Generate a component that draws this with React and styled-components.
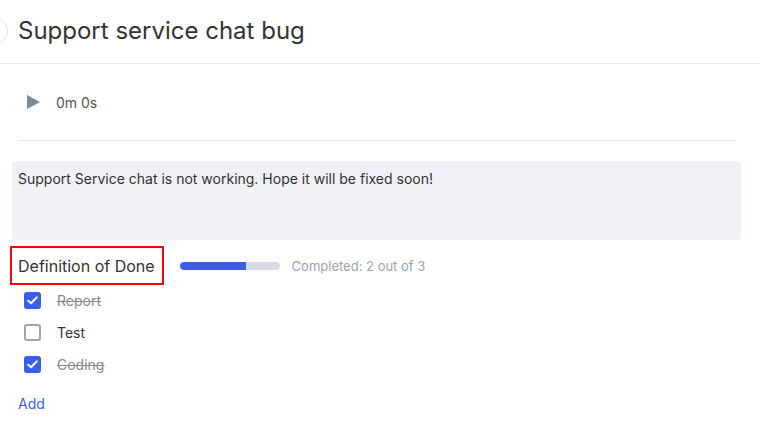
import React from "react";
import styled, { createGlobalStyle } from "styled-components";

const Global = createGlobalStyle`
  html, body { margin: 0; padding: 0; background: #fff; }
  body { font-family: Inter, "Noto Sans", sans-serif; color: #333; overflow: hidden; }
  * { box-sizing: border-box; }
`;

const Page = styled.div`
  width: 760px;
  height: 424px;
  overflow: hidden;
`;

const Header = styled.header`
  height: 64px;
  display: flex;
  align-items: center;
  gap: 10px;
  border-bottom: 1px solid #e7e6f2;
  padding-bottom: 2px;
`;

const BackCircle = styled.div`
  width: 26px;
  height: 26px;
  margin-left: -18px;
  border-radius: 50%;
  border: 1px solid #e2e2e6;
  background: #fff;
  flex: none;
`;

const Title = styled.h1`
  margin: 0;
  font-size: 24px;
  font-weight: 400;
  color: #333;
  letter-spacing: 0;
`;

const TimerRow = styled.div`
  margin: 0 25px 0 18px;
  height: 77px;
  border-bottom: 1px solid #ebe9f5;
  display: flex;
  align-items: center;
  gap: 16px;
  padding-left: 9px;
`;

const TimeText = styled.span`
  font-size: 14px;
  color: #555;
`;

const Description = styled.div`
  margin: 20px 19px 0 12px;
  height: 79px;
  background: #f0f1f6;
  border-radius: 4px;
  padding: 8px 6px;
  font-size: 14px;
  line-height: 20px;
  color: #333;
`;

const DodRow = styled.div`
  display: flex;
  align-items: center;
  margin-top: 6px;
  margin-left: 10px;
`;

const Highlight = styled.div`
  border: 2px solid #f00;
  height: 39px;
  padding: 0 7px 0 6px;
  display: flex;
  align-items: center;
`;

const DodTitle = styled.span`
  font-size: 16px;
  color: #333;
`;

const Progress = styled.div`
  width: 100px;
  height: 8px;
  border-radius: 4px;
  background: #d6dae4;
  margin-left: 16px;
  overflow: hidden;
`;

const ProgressFill = styled.div`
  height: 100%;
  background: #3a5fe5;
  border-radius: 4px 0 0 4px;
`;

const Completed = styled.span`
  margin-left: 12px;
  font-size: 13px;
  color: #97a3b6;
`;

const List = styled.ul`
  list-style: none;
  margin: -1px 0 0;
  padding: 0 0 0 24px;
`;

const Item = styled.li`
  height: 32px;
  display: flex;
  align-items: center;
  gap: 16px;
`;

const Box = styled.span`
  width: 17px;
  height: 17px;
  border-radius: 3px;
  flex: none;
  display: flex;
  align-items: center;
  justify-content: center;
  background: ${(p) => (p.$checked ? "#3a5fe5" : "#fff")};
  border: ${(p) => (p.$checked ? "none" : "2px solid #a3a3a3")};
`;

const ItemLabel = styled.span`
  font-size: 14px;
  color: ${(p) => (p.$done ? "#8a8a8a" : "#333")};
  text-decoration: ${(p) => (p.$done ? "line-through" : "none")};
`;

const AddLink = styled.a`
  display: inline-block;
  margin: 14px 0 0 18px;
  font-size: 14px;
  line-height: 20px;
  color: #3a5fe5;
  cursor: pointer;
`;

const items = [
  { label: "Report", done: true },
  { label: "Test", done: false },
  { label: "Coding", done: true },
];

export default function App() {
  const doneCount = items.filter((i) => i.done).length;
  return (
    <Page>
      <Global />
      <Header>
        <BackCircle />
        <Title>Support service chat bug</Title>
      </Header>
      <TimerRow>
        <svg width="13" height="14" viewBox="0 0 13 14">
          <path d="M0 0 L13 7 L0 14 Z" fill="#7b8b97" />
        </svg>
        <TimeText>0m 0s</TimeText>
      </TimerRow>
      <Description>Support Service chat is not working. Hope it will be fixed soon!</Description>
      <DodRow>
        <Highlight>
          <DodTitle>Definition of Done</DodTitle>
        </Highlight>
        <Progress>
          <ProgressFill style={{ width: `${(doneCount / items.length) * 100}%` }} />
        </Progress>
        <Completed>
          Completed: {doneCount} out of {items.length}
        </Completed>
      </DodRow>
      <List>
        {items.map((it) => (
          <Item key={it.label}>
            <Box $checked={it.done}>
              {it.done && (
                <svg width="11" height="9" viewBox="0 0 11 9">
                  <path d="M1.2 4.6 L4 7.3 L9.8 1.4" fill="none" stroke="#fff" strokeWidth="2" strokeLinecap="round" strokeLinejoin="round" />
                </svg>
              )}
            </Box>
            <ItemLabel $done={it.done}>{it.label}</ItemLabel>
          </Item>
        ))}
      </List>
      <AddLink>Add</AddLink>
    </Page>
  );
}
